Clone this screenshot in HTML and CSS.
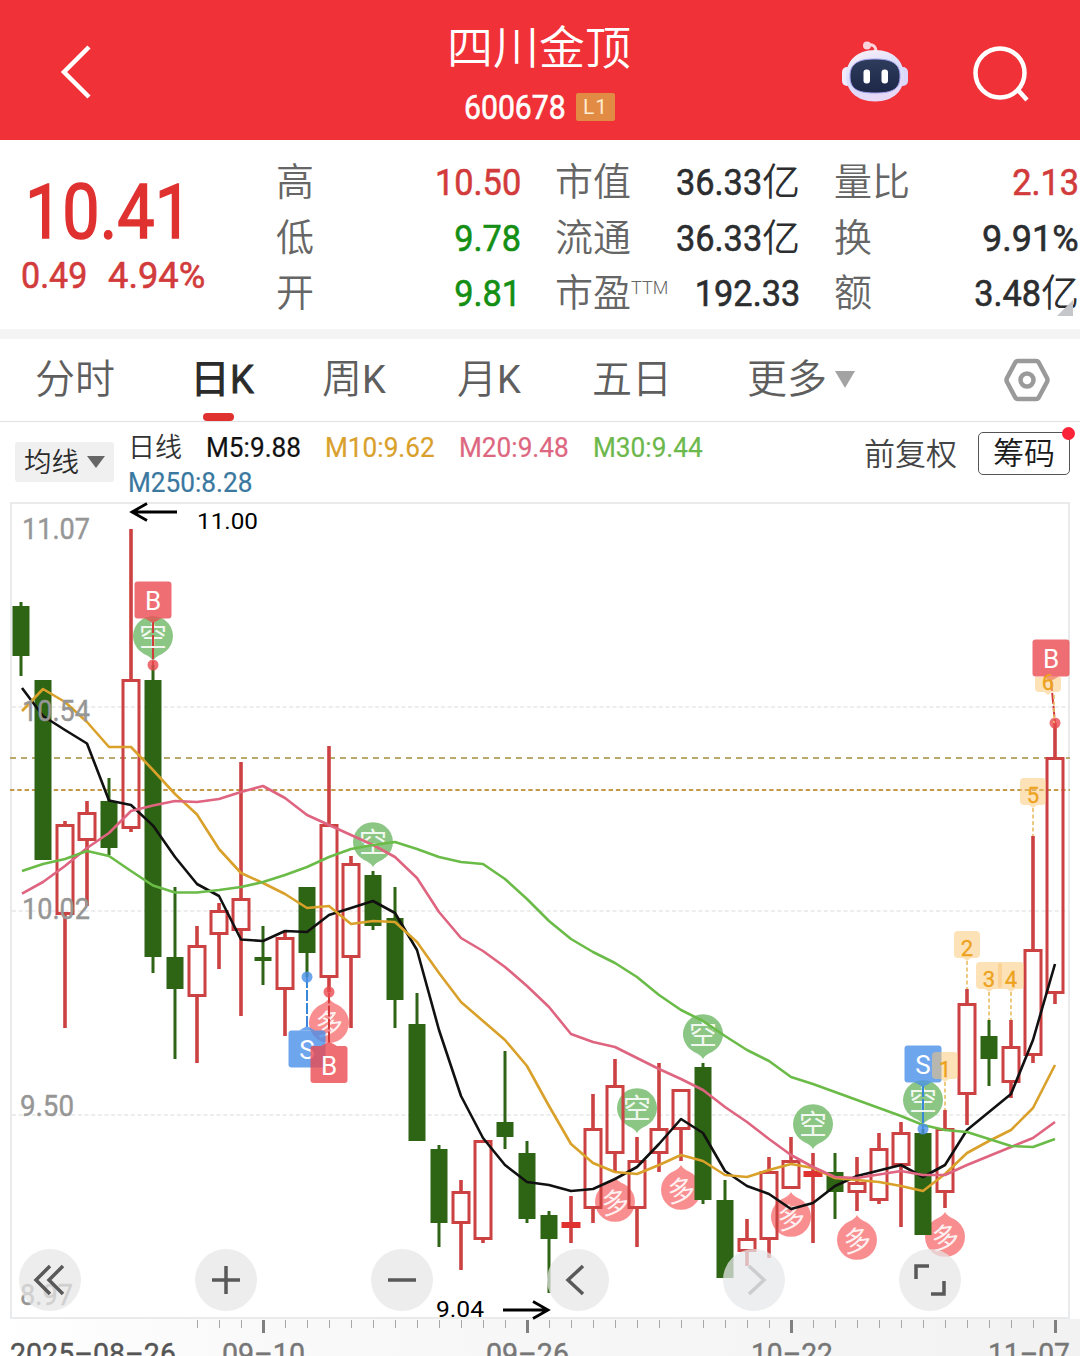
FILE: index.html
```html
<!DOCTYPE html>
<html lang="zh-CN">
<head>
<meta charset="utf-8">
<title>四川金顶 600678</title>
<link rel="stylesheet" href="styles.css">
</head>
<body>
<header class="topbar">
  <svg class="back" width="32" height="56" viewBox="0 0 32 56"><path d="M29 3 4 28 29 53"/></svg>
  <div class="title">
    <h1>四川金顶</h1>
    <div class="code"><span class="din">600678</span><span class="badge">L1</span></div>
  </div>
  <svg class="robot" width="68" height="62" viewBox="0 0 68 62">
    <defs>
      <linearGradient id="shell" x1="0" y1="0" x2="0.4" y2="1"><stop offset="0" stop-color="#fff4f8"/><stop offset=".55" stop-color="#d9dcfb"/><stop offset="1" stop-color="#e6d9f6"/></linearGradient>
      <linearGradient id="face" x1="0" y1="0" x2="0" y2="1"><stop offset="0" stop-color="#2e3c5c"/><stop offset="1" stop-color="#1d2748"/></linearGradient>
    </defs>
    <path d="M35 11c0-6-3-8-9-7" fill="none" stroke="#fbd3da" stroke-width="3"/>
    <circle cx="26" cy="4.500" r="4" fill="#fbd3da"/>
    <rect x="1" y="26" width="10" height="19" rx="5" fill="#efeafc"/><rect x="57" y="26" width="10" height="19" rx="5" fill="#dcd6fa"/>
    <path d="M34 9C53 9 63 21 63 35S53 60.500 34 60.500 5 49 5 35 15 9 34 9Z" fill="url(#shell)"/>
    <path d="M34 18C50 18 59 22 59 35S52 52 34 52 9 48 9 35 18 18 34 18Z" fill="url(#face)" stroke="#a3a0ee" stroke-width="1"/>
    <rect x="22.500" y="28.500" width="6.500" height="14" rx="3" fill="#fff"/><rect x="40.500" y="28.500" width="6.500" height="14" rx="3" fill="#fff"/>
  </svg>
  <svg class="search" width="58" height="58" viewBox="0 0 58 58"><circle cx="27" cy="27" r="24.500"/><path d="m45 44 9 10"/></svg>
</header>

<section class="quote">
  <div class="price">
    <div class="last"><span class="din">10.41</span></div>
    <div class="change"><span class="din">0.49</span><span class="din">4.94%</span></div>
  </div>
  <dl class="stats">
    <div><dt>高</dt><dd class="up"><span class="din">10.50</span></dd></div>
    <div><dt>低</dt><dd class="down"><span class="din">9.78</span></dd></div>
    <div><dt>开</dt><dd class="down"><span class="din">9.81</span></dd></div>
  </dl>
  <dl class="stats">
    <div><dt>市值</dt><dd><span class="din">36.33</span>亿</dd></div>
    <div><dt>流通</dt><dd><span class="din">36.33</span>亿</dd></div>
    <div><dt>市盈<sup>TTM</sup></dt><dd><span class="din">192.33</span></dd></div>
  </dl>
  <dl class="stats">
    <div><dt>量比</dt><dd class="up"><span class="din">2.13</span></dd></div>
    <div><dt>换</dt><dd><span class="din wide">9.91%</span></dd></div>
    <div><dt>额</dt><dd><span class="din">3.48</span>亿</dd></div>
  </dl>
  <i class="corner"></i>
</section>

<nav class="tabs">
  <a>分时</a><a class="active">日<b>K</b></a><a>周<b>K</b></a><a>月<b>K</b></a><a>五日</a><a>更多<i class="caret"></i></a>
  <svg class="gear" width="46" height="44" viewBox="0 0 46 44"><path d="M14 3h18q2 0 3 2l8 15q1 2 0 4l-8 15q-1 2-3 2H14q-2 0-3-2L3 24q-1-2 0-4L11 5q1-2 3-2Z"/><circle cx="23" cy="22" r="6.500"/></svg>
</nav>

<section class="legend">
  <button class="picker">均线<i class="caret"></i></button>
  <div class="averages">
    <div class="line"><span class="name">日线</span><span class="din m5">M5:9.88</span><span class="din m10">M10:9.62</span><span class="din m20">M20:9.48</span><span class="din m30">M30:9.44</span></div>
    <div class="line"><span class="din m250">M250:8.28</span></div>
  </div>
  <span class="adjust">前复权</span>
  <button class="chips">筹码</button>
</section>

<main class="chart">
  <svg id="kline" width="1080" height="856" viewBox="0 500 1080 856"></svg>
  <div class="controls">
    <button><svg viewBox="0 0 62 62"><path d="M31 17 17 31 31 45M44 17 30 31 44 45"/></svg></button>
    <button><svg viewBox="0 0 62 62"><path d="M17 31H45M31 17V45"/></svg></button>
    <button><svg viewBox="0 0 62 62"><path d="M17 31H45"/></svg></button>
    <button><svg viewBox="0 0 62 62"><path d="M36 17 21 31 36 45"/></svg></button>
    <button class="off"><svg viewBox="0 0 62 62"><path d="M26 17 41 31 26 45"/></svg></button>
    <button><svg viewBox="0 0 62 62"><path d="M17 30V17H30M32 45H45V32"/></svg></button>
  </div>
</main>
<script src="chart.js"></script>
</body>
</html>
```
FILE: styles.css
```css
* { box-sizing: border-box; }
body { margin: 0; width: 1080px; height: 1356px; overflow: hidden; background: #fff; color: #2b2d2f; font-family: "Roboto", "Noto Sans CJK SC", sans-serif; }
button { font: inherit; border: 0; padding: 0; background: none; }
h1, dl, dd { margin: 0; font-weight: 400; }
.din { display: inline-block; font-weight: 400; -webkit-text-stroke: .6px; transform: scaleX(.9); white-space: nowrap; }

.topbar { display: flex; height: 140px; background: #f03138; color: #fff; padding-left: 61px; }
.topbar svg { fill: none; stroke: #fff; stroke-width: 4.500; flex: none; }
.topbar .robot { stroke: none; margin: 41px 0 0 210px; }
.topbar .back { margin: 44px 0 0 -1px; }
.topbar .search { margin: 46px 0 0 64px; }
.title { width: 184px; margin-left: 355px; text-align: center; }
.title h1 { font-size: 46px; font-weight: 350; line-height: 60px; margin-top: 18px; white-space: nowrap; }
.code { display: flex; align-items: center; height: 40px; margin-top: 9px; padding-left: 17px; font-size: 33.500px; }
.code .din { transform-origin: left; width: 112px; flex: none; }
.badge { width: 39px; height: 28px; line-height: 29px; background: #e28b45; color: #ffeccf; font-size: 21px; letter-spacing: 1px; border-radius: 2px; flex: none; }

.quote { position: relative; display: flex; height: 189px; padding-top: 14px; overflow: hidden; }
.price { width: 277px; flex: none; color: #e03131; }
.last { height: 97px; line-height: 116px; font-size: 76px; padding-left: 25px; }
.last .din { transform: scaleX(.875); transform-origin: left; -webkit-text-stroke: 1.500px; }
.change { display: flex; height: 50px; line-height: 50px; font-size: 37px; color: #d23b3b; padding-left: 21px; }
.change .din { transform-origin: left; width: 87px; transform: scaleX(.92); }
.change .din + .din { transform: scaleX(.98); }
.stats { width: 244px; margin-right: 35px; flex: none; }
.stats + .stats + .stats { margin-right: 0; }
.stats div { display: flex; justify-content: space-between; height: 55.500px; line-height: 56px; font-size: 38px; white-space: nowrap; }
.stats dt { color: #666; font-weight: 350; margin-left: -1px; }
.stats dd { font-weight: 350; }
.stats dd .din { transform-origin: right; font-size: 37.500px; transform: scaleX(.915); }
.stats dd .wide { transform: scaleX(.96); }
.stats sup { font-size: 18px; vertical-align: 12px; line-height: 0; font-weight: 300; }
.up { color: #d23b3b; }
.down { color: #148f14; }
.corner { position: absolute; right: 7px; bottom: 13px; border: 8px solid; border-color: transparent #c4c6c9 #c4c6c9 transparent; }

.tabs { display: flex; height: 93px; border-top: 10px solid #f4f4f4; border-bottom: 1px solid #e2e2e2; padding-left: 35px; font-size: 40px; font-weight: 350; line-height: 82px; color: #5e5e5e; }
.tabs a { position: relative; width: 135px; white-space: nowrap; flex: none; }
.tabs a:nth-child(1) { width: 155px; }
.tabs a:nth-child(2) { width: 132px; }
.tabs a:nth-child(5) { width: 155px; }
.tabs a:nth-child(6) { width: 257px; }
.tabs b { font-weight: 400; font-size: 38px; }
.tabs .active { color: #2b2b2b; font-weight: 500; }
.active b { -webkit-text-stroke: .8px; }
.active::after { content: ""; position: absolute; left: 13px; bottom: 0; width: 31px; height: 8px; border-radius: 4px; background: #e03131; }
.caret { display: inline-block; border: 10px solid transparent; border-top: 17px solid #a3a3a3; border-bottom: 0; margin-left: 8px; vertical-align: 5px; }
.gear { margin-top: 19px; fill: none; stroke: #9a9a9a; stroke-width: 4.500; flex: none; }

.legend { display: flex; height: 78px; font-weight: 350; white-space: nowrap; }
.picker { width: 99px; height: 40px; margin: 20px 0 0 15px; background: #f0f0f0; border-radius: 3px; font-size: 27.500px; line-height: 42px; color: #2b2b2b; flex: none; }
.picker .caret { border-width: 12px 9px 0; border-top-color: #666; margin-left: 8px; vertical-align: 4px; }
.averages { width: 750px; flex: none; padding: 8px 0 0 14px; font-size: 27px; }
.line { display: flex; height: 35px; line-height: 36px; }
.line .din { transform-origin: left; transform: scaleX(.97); font-size: 27px; -webkit-text-stroke: .2px; }
.name { width: 78px; color: #333; }
.m5 { width: 119px; color: #111; }
.m10, .m20 { width: 134px; color: #daa02c; }
.m20 { color: #dd6680; }
.m30 { color: #6cb84c; }
.m250 { color: #3a78a0; }
.adjust { width: 114px; flex: none; font-size: 31px; line-height: 66px; color: #444; }
.chips { position: relative; width: 92px; flex: none; height: 43px; margin-top: 10px; border: 1.500px solid #555; border-radius: 5px; font-size: 31px; line-height: 42px; color: #1c1c1c; }
.chips::after { content: ""; position: absolute; right: -6px; top: -6px; width: 13px; height: 13px; border-radius: 50%; background: #fb2438; }

.chart { position: relative; height: 856px; }
.chart > svg { display: block; }
.controls { position: absolute; left: 19px; top: 749px; display: flex; gap: 114px; }
.controls button { width: 62px; height: 62px; border-radius: 50%; background: rgba(230, 230, 230, .72); }
.controls svg { display: block; fill: none; stroke: #595959; stroke-width: 3.500; }
.controls .off { background: rgba(230, 232, 235, .74); }
.controls .off svg { stroke: #cbcdce; }

.grid { stroke: #dcdcdc; stroke-width: 1.200; stroke-dasharray: 4 2.600; }
.wick-up { stroke: #cc4141; stroke-width: 3.600; }
.wick-down { stroke: #2e6514; stroke-width: 3; }
.body-up { fill: none; stroke: #cc4141; stroke-width: 3; }
.body-flat { fill: #e03131; }
.body-down { fill: #2e6514; }
.ma { fill: none; stroke-width: 2.600; stroke-linejoin: round; }
.scale { fill: #969696; stroke: #969696; stroke-width: .4px; font-size: 29px; }
.extreme { fill: #000; font-size: 22.500px; }
.arrow { fill: none; stroke: #000; stroke-width: 2.800; }
.date { font-size: 29px; fill: #777; stroke: #777; stroke-width: .4px; }
.date.first { fill: #555; stroke: #555; }
.pin text { font-size: 28px; font-weight: 400; fill: #fff; fill-opacity: .9; text-anchor: middle; }
.flag text { font-size: 26px; fill: #fff; text-anchor: middle; }
.tag text { font-size: 22px; fill: #eda21c; stroke: #eda21c; stroke-width: .3px; text-anchor: middle; }
```
FILE: chart.js
```js
const svg = document.getElementById('kline');
const out = [];
const add = s => out.push(s);
const cx = i => 21 + 22 * i;

// kind, high, body top, body bottom, low (u: hollow up, d: solid down, f: flat)
const candles = [
  ['d',602,606,656,676],['d',680,680,860,860],['u',821,824,915,1028],['u',801,812,841,906],
  ['d',778,801,848,855],['u',529,679,829,832],['d',665,680,957,973],['d',887,957,989,1059],
  ['u',926,945,997,1063],['u',903,910,935,969],['u',762,898,931,1016],['d',926,957,961,985],
  ['u',932,937,990,1036],['d',887,887,953,977],['u',746,824,978,992],['u',856,863,958,1028],
  ['d',871,875,926,930],['d',887,918,1000,1028],['d',993,1024,1141,1141],['d',1145,1149,1223,1247],
  ['u',1180,1191,1224,1270],['u',1140,1140,1240,1243],['d',1051,1122,1137,1149],['d',1141,1153,1219,1223],
  ['d',1211,1215,1239,1293],['f',1196,1222,1228,1243],['u',1094,1128,1209,1223],['u',1059,1085,1154,1172],
  ['u',1137,1160,1209,1247],['u',1063,1128,1154,1172],['u',1089,1089,1130,1161],['d',1063,1067,1200,1204],
  ['d',1180,1200,1278,1278],['u',1219,1238,1252,1266],['u',1157,1171,1240,1258],['u',1137,1160,1189,1189],
  ['f',1153,1171,1177,1243],['d',1153,1172,1192,1219],['u',1157,1182,1193,1211],['u',1133,1148,1201,1204],
  ['u',1122,1132,1166,1227],['d',1129,1133,1235,1235],['u',1110,1128,1193,1208],['u',989,1003,1095,1125],
  ['d',1020,1036,1059,1086],['u',1020,1046,1083,1098],['u',836,949,1056,1063],['u',723,757,994,1004]
];
const averages = {
  '#111': [688,716,730,743.5,800.5,805,825.6,857,884,896,939.5,941,931,932,915,908,901,913,950,1030,1096,1138,1165,1182,1185,1191,1189,1179,1167,1144,1119,1133,1171,1186,1194,1209,1203,1186,1176,1170.5,1165,1177,1165,1130,1112,1094,1040,964],
  '#d9a02a': [711,689,702,722,747,747,770,794,814.5,849,873,883,894,908,906,924,921,922,942,973,1002,1021,1040,1066,1106,1144,1163,1172,1174,1165,1155,1161,1175,1177,1170,1164,1168,1178,1180,1182,1186,1191,1174,1153,1141,1130,1108,1065],
  '#df6480': [893.6,882,866,848,833,811,805.6,801,802,799,792,786,798,815,825,835,845,857,878,912,938,951,967,986,1007,1034,1042,1047,1058,1069,1079,1090,1107,1122,1139,1155,1167,1177,1178,1174.5,1171,1175,1175,1165,1156,1147,1138,1122],
  '#6abb47': [871,864,859,851,856,871,885.5,892.5,892.5,890,887,882,875,867,857,849,845,842,849,857,862,864,879,899,921,939,952,963,977,995,1010,1021,1036,1050,1061,1077,1084,1092,1100,1108,1116,1125,1130,1132,1139,1146,1147,1139]
};

// axis strip, frame and guides
add('<defs><linearGradient id="strip" x1="0" x2="1"><stop offset="0" stop-color="#fff"/><stop offset=".2" stop-color="#fafafa"/><stop offset="1" stop-color="#f2f2f2"/></linearGradient></defs>');
add('<rect x="0" y="1319" width="1080" height="37" fill="url(#strip)"/>');
add('<rect x="11" y="503" width="1058" height="815" fill="none" stroke="#e9eaec" stroke-width="2"/>');
for (const y of [707, 911, 1115]) add(`<path class="grid" d="M12 ${y}H1069"/>`);
add('<path d="M10 758H1070" stroke="#b9a96a" stroke-width="1.800" stroke-dasharray="6 5"/>');
add('<path d="M10 790H1070" stroke="#c39a4a" stroke-width="2" stroke-dasharray="4.400 2.900"/>');

// signal pins
const pin = (x, y, down) => {
  const s = down ? 1 : -1;
  add(`<g class="pin"><path fill="${down ? '#78bd70' : '#f77b7d'}" opacity=".86" d="M${x} ${y + 25 * s}Q${x + 2} ${y + 21 * s} ${x + 9} ${y + 18 * s}A20 20 0 1 ${down ? 0 : 1} ${x - 9} ${y + 18 * s}Q${x - 2} ${y + 21 * s} ${x} ${y + 25 * s}Z"/>` +
      `<text x="${x}" y="${y + 11}"${down ? '' : ` transform="rotate(-8 ${x} ${y})"`}>${down ? '空' : '多'}</text></g>`);
};
[[153,636],[373,842],[637,1108],[703,1034],[813,1124],[923,1100]].forEach(p => pin(...p, true));
[[329,1023],[615,1202],[681,1190],[791,1217],[857,1240],[945,1237]].forEach(p => pin(...p, false));

candles.forEach(([k, h, t, b, l], i) => {
  const x = cx(i);
  const wick = k === 'd' ? 'wick-down' : 'wick-up';
  if (k === 'u') {
    add(`<path class="${wick}" d="M${x} ${h}V${t}M${x} ${b}V${l}"/><rect class="body-up" x="${x - 8}" y="${t + 1.5}" width="16" height="${b - t - 3}"/>`);
  } else {
    const w = k === 'f' ? 19 : 17;
    add(`<path class="${wick}" d="M${x} ${h}V${l}"/><rect class="body-${k === 'f' ? 'flat' : 'down'}" x="${x - w / 2}" y="${t}" width="${w}" height="${b - t}"/>`);
  }
});

for (const [colour, ys] of Object.entries(averages))
  add(`<polyline class="ma" stroke="${colour}" points="${ys.map((y, i) => (i ? cx(i) : 22) + ',' + y).join(' ')}"/>`);

// buy and sell flags: letter, flag centre, anchor point
const flag = (c, x, y, ax, ay) => {
  const col = c === 'B' ? '#ea4a50' : '#4a90ea', s = ay > y ? 1 : -1;
  add(`<g class="flag"><path d="M${x} ${y + 22 * s}L${ax} ${ay}" stroke="${c === 'B' ? '#d23b3b' : '#3a86d8'}" stroke-width="2" stroke-dasharray="11 2"/><circle cx="${ax}" cy="${ay}" r="5.500" fill="${col}" opacity=".8"/>` +
      `<rect x="${x - 18.5}" y="${y - 18.5}" width="37" height="37" rx="3" fill="${col}" opacity=".8"/><path d="M${x - 8} ${y + 18.5 * s}h16l-8 ${4.5 * s}z" fill="${col}" opacity=".8"/><text x="${x}" y="${y + 10}">${c}</text></g>`);
};
flag('S', 307, 1049, 307, 977);
flag('B', 329, 1064.5, 329, 992);
flag('B', 153, 600, 153, 665);
flag('S', 923, 1064, 923, 1129);
flag('B', 1051, 658, 1055, 723);

// day count tags: number, centre x, top, end of leader
[[1,945,1052,1110],[2,967,931,989],[3,989,962,1020],[4,1011,962,1020],[5,1033,778,836],[6,1048,665,723]].forEach(([n, x, y, e]) =>
  add(`<g class="tag"><path d="M${n === 6 ? 1054 : x} ${y + 30}V${e}" stroke="#e8bd63" stroke-width="1.600" stroke-dasharray="4 2.500"/><path d="${n === 6 ? `M${x - 13} ${y + 12}h26v11q0 4-4 4h-5l-4 3-4-3h-5q-4 0-4-4z` : `M${x - 9} ${y}h18q4 0 4 4v19q0 4-4 4h-5l-4 3-4-3h-5q-4 0-4-4v-19q0-4 4-4z`}" fill="#fcc574" opacity=".52"/><text x="${x}" y="${y + 25}">${n}</text></g>`));

const label = (cls, x, y, w, s) => add(`<text class="${cls}" x="${x}" y="${y}" textLength="${w}" lengthAdjust="spacingAndGlyphs">${s}</text>`);
label('scale', 22, 538.5, 68, '11.07');
label('scale', 22, 721, 68, '10.54');
label('scale', 22, 918.5, 68, '10.02');
label('scale', 20, 1115.5, 54, '9.50');
label('scale', 20, 1304.5, 53, '8.97');
label('extreme', 197, 528.5, 61, '11.00');
label('extreme', 436, 1317, 48, '9.04');
add('<path class="arrow" d="M177 512H132M147 503.500 132 512 147 520.500M503 1310H548M533 1301.500 548 1310 533 1318.500"/>');

for (let i = 8; i < 48; i++) {
  const major = (i - 11) % 12 === 0;
  add(`<path d="M${cx(i) + .5} 1320V${major ? 1333 : 1328}" stroke="${major ? '#808080' : '#a8a8a8'}" stroke-width="${major ? 3 : 1}"/>`);
}
label('date first', 10, 1363.5, 166, '2025–08–26');
label('date', 222, 1363.5, 83, '09–10');
label('date', 486, 1363.5, 83, '09–26');
label('date', 751, 1363.5, 82, '10–22');
label('date', 988, 1363.5, 82, '11–07');

svg.innerHTML = out.join('');
```
